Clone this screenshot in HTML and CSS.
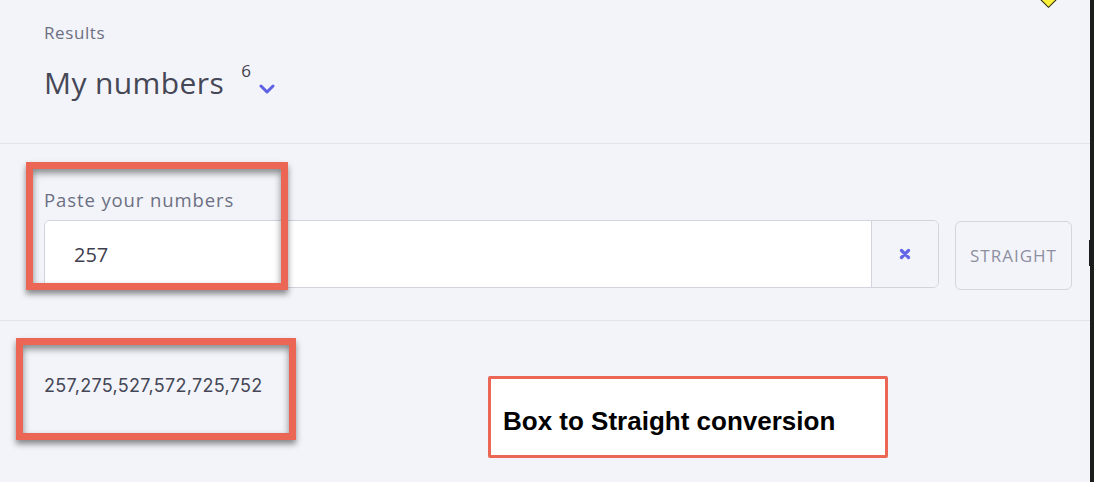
FILE: index.html
```html
<!DOCTYPE html>
<html lang="en">
<head>
    <meta charset="UTF-8">
    <meta name="viewport" content="width=device-width, initial-scale=1.0">
    <title>My numbers</title>
    <link rel="stylesheet" href="styles.css">
</head>
<body>

<div class="page">
    <!-- Encabezado de resultados -->
    <div class="results-head">
        <div class="eyebrow">Results</div>
        <div class="title-row">
            <h1>My numbers</h1>
            <sup class="count">6</sup>
            <svg class="chevron" width="16" height="10" viewBox="0 0 16 10">
                <path d="M2 2 L8 8 L14 2" fill="none" stroke="#5d60e3" stroke-width="3" stroke-linecap="round" stroke-linejoin="round"/>
            </svg>
        </div>
    </div>

    <!-- Entrada de numeros -->
    <div class="paste-section">
        <label class="field-label" for="numbers">Paste your numbers</label>
        <div class="input-row">
            <div class="field">
                <input type="text" id="numbers" value="257">
                <button class="clear-btn" aria-label="Clear">
                    <svg width="12" height="12" viewBox="0 0 12 12">
                        <path d="M2.5 2.5 L9.5 9.5 M9.5 2.5 L2.5 9.5" stroke="#6366e6" stroke-width="3.2" stroke-linecap="round"/>
                    </svg>
                </button>
            </div>
            <button class="mode-btn">STRAIGHT</button>
        </div>
    </div>

    <!-- Resultado -->
    <div class="output-section">
        <p class="output">257,275,527,572,725,752</p>
    </div>

    <!-- Anotaciones -->
    <div class="mark mark-input"></div>
    <div class="mark mark-output"></div>
    <div class="note">Box to Straight conversion</div>
    <div class="diamond"></div>
</div>

<div class="edge">
    <span class="edge-notch"></span>
</div>

</body>
</html>
```

FILE: styles.css
```css
body {
    margin: 0;
    padding: 0;
    display: flex;
    height: 482px;
    overflow: hidden;
    background-color: #f3f4f9;
    font-family: 'Open Sans', sans-serif;
    color: #3f404e;
}

.page {
    position: relative;
    width: 1090px;
    flex-shrink: 0;
    overflow: hidden;
}

.edge {
    position: relative;
    width: 4px;
    flex-shrink: 0;
    background-color: #1b1c1c;
}

.edge-notch {
    position: absolute;
    left: -1px;
    top: 240px;
    width: 5px;
    height: 26px;
    background-color: #1b1c1c;
}

/* Encabezado */
.results-head {
    padding: 22px 44px 0;
    height: 121px;
    border-bottom: 1px solid #e2e3ea;
}

.eyebrow {
    font-size: 17px;
    line-height: 22px;
    letter-spacing: 0.6px;
    color: #6c6f82;
}

.title-row {
    display: flex;
    align-items: flex-start;
    margin-top: 19px;
}

.title-row h1 {
    margin: 0;
    font-size: 30px;
    font-weight: 400;
    line-height: 40px;
    letter-spacing: 0.4px;
    color: #454756;
}

.count {
    margin-left: 17px;
    margin-top: -1px;
    font-size: 17px;
    line-height: 18px;
    color: #3f404e;
}

.chevron {
    margin-left: 8px;
    margin-top: 21px;
}

/* Entrada */
.paste-section {
    padding: 44px 18px 0 44px;
    height: 132px;
    border-bottom: 1px solid #e2e3ea;
}

.field-label {
    display: block;
    font-size: 18.5px;
    line-height: 24px;
    letter-spacing: 0.9px;
    color: #6c6f82;
    margin-bottom: 8px;
}

.input-row {
    display: flex;
    gap: 16px;
}

.field {
    flex: 1;
    display: flex;
    height: 68px;
    border: 1px solid #d2d3dc;
    border-radius: 6px;
    overflow: hidden;
    box-sizing: border-box;
}

.field input {
    flex: 1;
    border: none;
    outline: none;
    padding: 0 0 0 29px;
    font-family: 'Open Sans', sans-serif;
    font-size: 20px;
    color: #3f404e;
    background-color: #ffffff;
}

.clear-btn {
    width: 67px;
    border: none;
    border-left: 1px solid #d2d3dc;
    background-color: #f3f4f9;
    display: flex;
    align-items: center;
    justify-content: center;
    padding: 0;
}

.mode-btn {
    width: 117px;
    height: 69px;
    margin-top: 1px;
    border: 1px solid #d4d5de;
    border-radius: 6px;
    background-color: #f3f4f9;
    font-family: 'Open Sans', sans-serif;
    font-size: 17px;
    letter-spacing: 1px;
    color: #8d8fa1;
    padding: 0;
}

/* Resultado */
.output-section {
    padding: 53px 44px 0;
}

.output {
    margin: 0;
    font-family: 'Inter', sans-serif;
    font-size: 18px;
    line-height: 24px;
    letter-spacing: 0.3px;
    color: #454756;
}

/* Anotaciones */
.mark {
    position: absolute;
    border: 7px solid #ec6656;
    box-shadow: 0 4px 6px rgba(0, 0, 0, 0.45), inset 0 4px 7px rgba(0, 0, 0, 0.45);
    box-sizing: border-box;
}

.mark-input {
    left: 26px;
    top: 162px;
    width: 262px;
    height: 128px;
}

.mark-output {
    left: 16px;
    top: 338px;
    width: 280px;
    height: 102px;
}

.note {
    position: absolute;
    left: 488px;
    top: 376px;
    width: 400px;
    height: 82px;
    box-sizing: border-box;
    border: 3px solid #ec6656;
    border-radius: 2px;
    background-color: #ffffff;
    padding: 27px 0 0 12px;
    font-family: 'Liberation Sans', Arial, sans-serif;
    font-weight: bold;
    font-size: 26px;
    line-height: 30px;
    color: #000000;
}

.diamond {
    position: absolute;
    left: 1041px;
    top: -10px;
    width: 13px;
    height: 13px;
    background-color: #fdf23a;
    border: 1.5px solid #1a1a1a;
    transform: rotate(45deg);
}
```
